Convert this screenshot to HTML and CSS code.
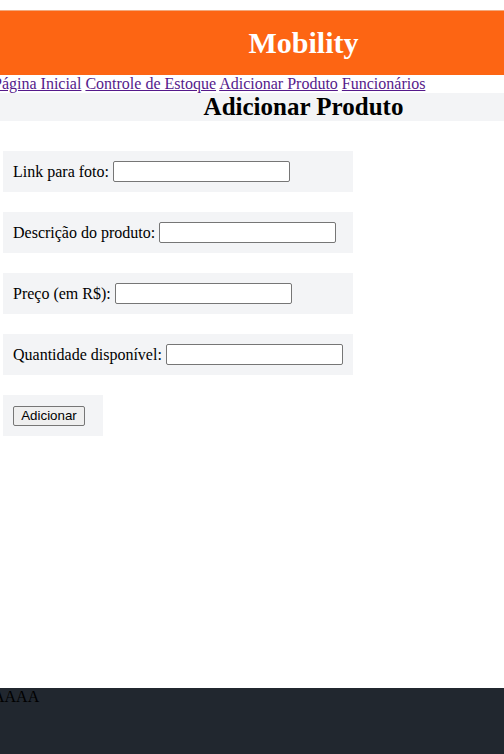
FILE: index.html
```html
<!DOCTYPE html>
<html lang="pt-BR">
<head>
<meta charset="utf-8">
<title>Mobility - Adicionar Produto</title>
<link rel="stylesheet" href="styles.css">
</head>
<body>
<div class="page">
  <header class="topbar">
    <h1 class="brand">Mobility</h1>
  </header>
  <nav class="nav">
    <a href="#">Página Inicial</a>
    <a href="#">Controle de Estoque</a>
    <a href="#">Adicionar Produto</a>
    <a href="#">Funcionários</a>
  </nav>
  <h2 class="title">Adicionar Produto</h2>
  <form class="form">
    <div class="row"><label>Link para foto: <input type="text" class="field"></label></div>
    <div class="row"><label>Descrição do produto: <input type="text" class="field"></label></div>
    <div class="row"><label>Preço (em R$): <input type="text" class="field"></label></div>
    <div class="row"><label>Quantidade disponível: <input type="text" class="field"></label></div>
    <div class="row row-btn"><button type="button" class="btn">Adicionar</button></div>
  </form>
  <footer class="footer">AAAA</footer>
</div>
</body>
</html>
```
FILE: styles.css
```css
html, body {
  margin: 0;
  padding: 0;
  overflow: hidden;
  background: #ffffff;
}
body {
  font-family: "Liberation Serif", "Times New Roman", serif;
  font-size: 16px;
  color: #000;
}
.page {
  margin-left: -7px;
  width: 621px;
  min-height: 754px;
  display: flex;
  flex-direction: column;
}
.topbar {
  margin-top: 10px;
  height: 64px;
  border-top: 1px solid #f2a97d;
  background: #fd6513;
  display: flex;
  align-items: center;
  justify-content: center;
}
.brand {
  margin: 0;
  color: #ffffff;
  font-size: 30px;
  font-weight: bold;
  line-height: 1;
}
.nav {
  height: 18px;
  line-height: 18px;
}
.nav a {
  color: #551a8b;
}
.title {
  margin: 0;
  background: #f3f4f6;
  text-align: center;
  font-size: 25px;
  font-weight: bold;
  height: 28px;
  line-height: 28px;
}
.form {
  margin: 30px 0 0 10px;
  display: flex;
  flex-direction: column;
  align-items: flex-start;
  gap: 20px;
}
.row {
  background: #f3f4f6;
  width: 350px;
  height: 41px;
  box-sizing: border-box;
  padding: 10px;
  display: flex;
  align-items: center;
}
.row label {
  display: flex;
  align-items: center;
  white-space: pre;
}
.field {
  width: 177px;
  height: 21px;
  box-sizing: border-box;
  border: 1px solid #767676;
  border-radius: 2px;
  padding: 1px 2px;
  margin: 0;
  background: #fff;
  font-size: 13px;
}
.row-btn {
  width: 100px;
}
.btn {
  font-family: "Liberation Sans", Arial, sans-serif;
  font-size: 13.33px;
  width: 72px;
  height: 20px;
  padding: 0;
  margin: 0;
  border: 1px solid #767676;
  border-radius: 2px;
  background: #efefef;
  color: #000;
}
.footer {
  margin-top: auto;
  height: 66px;
  background: #21272f;
  color: #000;
  line-height: 18px;
}
```
